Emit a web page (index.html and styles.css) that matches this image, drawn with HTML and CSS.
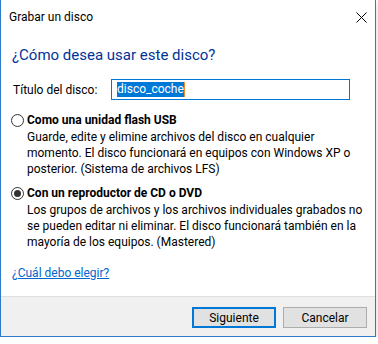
FILE: index.html
```html
<!DOCTYPE html>
<html lang="es">

<head>
    <meta charset="UTF-8">
    <meta name="viewport" content="width=device-width, initial-scale=1.0">
    <title>Grabar un disco</title>
    <link rel="stylesheet" href="styles.css">
</head>

<body>
    <div class="dialog">
        <div class="titlebar">
            <span class="title">Grabar un disco</span>
            <span class="close">
                <svg width="11" height="11" viewBox="0 0 11 11">
                    <path d="M0.5 0.5 L10.5 10.5 M10.5 0.5 L0.5 10.5" stroke="#000" stroke-width="1" fill="none" />
                </svg>
            </span>
        </div>
        <div class="main">
            <h1>¿Cómo desea usar este disco?</h1>
            <div class="name-row">
                <span class="label">Título del disco:</span>
                <div class="text-box"><span class="selected">disco_coche</span></div>
            </div>
            <div class="option">
                <span class="radio"></span>
                <div class="option-text">
                    <div class="option-title">Como una unidad flash USB</div>
                    <div class="option-desc">Guarde, edite y elimine archivos del disco en cualquier<br>momento. El disco funcionará en equipos con Windows XP o<br>posterior. (Sistema de archivos LFS)</div>
                </div>
            </div>
            <div class="option">
                <span class="radio checked"></span>
                <div class="option-text">
                    <div class="option-title">Con un reproductor de CD o DVD</div>
                    <div class="option-desc">Los grupos de archivos y los archivos individuales grabados no<br>se pueden editar ni eliminar. El disco funcionará también en la<br>mayoría de los equipos. (Mastered)</div>
                </div>
            </div>
            <a class="help" href="#">¿Cuál debo elegir?</a>
        </div>
        <div class="footer">
            <button class="btn default">Siguiente</button>
            <button class="btn">Cancelar</button>
        </div>
    </div>
</body>

</html>
```
FILE: styles.css
```css
body {
    margin: 0;
    background: #ffffff;
    font-family: Roboto, sans-serif;
    font-size: 12px;
    color: #000;
}

.dialog {
    width: 376px;
    height: 337px;
    box-sizing: border-box;
    border: 1px solid #2b7bc8;
    border-top: none;
    background: #fff;
    display: flex;
    flex-direction: column;
    box-shadow: 0 3px 8px rgba(0, 0, 0, 0.18);
}

.titlebar {
    height: 34px;
    display: flex;
    align-items: center;
    justify-content: space-between;
    padding: 0 8px 0 8px;
}

.close {
    display: flex;
}

.main {
    flex: 1;
    padding: 0 11px;
    display: flex;
    flex-direction: column;
    align-items: flex-start;
}

h1 {
    margin: 11px 0 0 0;
    font-size: 15px;
    font-weight: normal;
    line-height: 20px;
    color: #003399;
}

.name-row {
    margin-top: 14px;
    display: flex;
    align-items: center;
    height: 21px;
}

.label {
    width: 99px;
    padding-left: 1px;
    box-sizing: border-box;
}

.text-box {
    width: 239px;
    height: 21px;
    box-sizing: border-box;
    border: 1px solid #0078d7;
    padding-left: 5px;
    display: flex;
    align-items: center;
}

.selected {
    background: #0078d7;
    color: #fff;
    line-height: 15px;
    border-right: 1px solid #f08a24;
}

.option {
    margin-top: 12px;
    display: flex;
    gap: 3px;
    margin-left: -1px;
}

.option + .option {
    margin-top: 8px;
}

.radio {
    width: 13px;
    height: 13px;
    box-sizing: border-box;
    border: 1px solid #333;
    border-radius: 50%;
    margin-top: 2px;
    display: flex;
    align-items: center;
    justify-content: center;
    flex-shrink: 0;
}

.radio.checked::after {
    content: '';
    width: 7px;
    height: 7px;
    border-radius: 50%;
    background: #333;
}

.option-title {
    font-weight: bold;
    line-height: 17px;
}

.option-desc {
    line-height: 16px;
    white-space: nowrap;
}

.help {
    margin-top: 15px;
    line-height: 16px;
    color: #0066cc;
}

.footer {
    height: 40px;
    box-sizing: border-box;
    border-top: 1px solid #dfdfdf;
    background: #f0f0f0;
    display: flex;
    justify-content: flex-end;
    align-items: flex-start;
    gap: 7px;
    padding: 10px 8px 0 0;
}

.btn {
    width: 84px;
    height: 21px;
    box-sizing: border-box;
    background: #e1e1e1;
    border: 1px solid #adadad;
    font-family: Roboto, sans-serif;
    font-size: 12px;
    color: #000;
    padding: 0;
}

.btn.default {
    border: 2px solid #0078d7;
}
```
